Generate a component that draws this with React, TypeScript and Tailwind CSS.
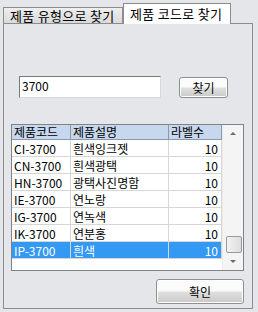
const rows = [
  { code: "CI-3700", desc: "흰색잉크젯", n: 10 },
  { code: "CN-3700", desc: "흰색광택", n: 10 },
  { code: "HN-3700", desc: "광택사진명함", n: 10 },
  { code: "IE-3700", desc: "연노랑", n: 10 },
  { code: "IG-3700", desc: "연녹색", n: 10 },
  { code: "IK-3700", desc: "연분홍", n: 10 },
  { code: "IP-3700", desc: "흰색", n: 10, selected: true },
]

const font = { fontFamily: '"Noto Sans CJK KR", "Noto Sans", sans-serif' }

function Btn({ label, className }: { label: string; className: string }) {
  return (
    <button
      className={`flex items-center justify-center rounded-[3px] border border-[#8e8f8f] bg-gradient-to-b from-[#fbfbfb] from-45% via-[#dedede] via-55% to-[#c9c9c9] text-[12px] text-black shadow-[inset_0_0_0_1px_#fff] ${className}`}
    >
      {label}
    </button>
  )
}

export default function App() {
  return (
    <div
      className="w-[258px] h-[312px] bg-[#e4e6ea] px-[3px] pt-[2px] overflow-hidden"
      style={font}
    >
      {/* tabs */}
      <div className="flex items-end h-[21px]">
        <div className="h-[16px] w-[120px] border border-b-0 border-[#8c8c8c] bg-gradient-to-b from-[#efefef] to-[#dadada] text-[13px] leading-[15px] tracking-[0.3px] pl-[6px] text-black">
          제품 유형으로 찾기
        </div>
        <div className="relative z-10 -mb-px h-[21px] w-[108px] border border-b-0 border-[#8c8c8c] bg-white text-[13px] leading-[20px] tracking-[0.3px] pl-[6px] text-black">
          제품 코드로 찾기
        </div>
      </div>

      {/* panel */}
      <div className="h-[286px] w-[250px] border border-[#8c8c8c] bg-[#e4e6ea]">
        <div className="flex items-start mt-[52px] ml-[15px]">
          <div className="h-[22px] w-[142px] border border-t-[#7a7a7a] border-l-[#7a7a7a] border-r-[#d8d8d8] border-b-[#d8d8d8] bg-white text-[12px] leading-[17px] pl-[2px] text-black">
            3700
          </div>
          <Btn label="찾기" className="ml-[18px] mt-px h-[21px] w-[49px]" />
        </div>

        {/* table */}
        <div className="mt-[26px] ml-[7px] flex h-[147px] w-[233px] border border-[#7f8387] bg-white">
          <div className="flex-1">
            <div className="flex h-[15px] bg-[#c7d8ee] text-[12px] leading-[14px] text-black">
              <div className="w-[59px] border-r border-b border-[#8a9aac] pl-[2px]">제품코드</div>
              <div className="w-[98px] border-r border-b border-[#8a9aac] pl-[2px]">제품설명</div>
              <div className="w-[53px] border-r border-b border-[#8a9aac] pl-[2px]">라벨수</div>
            </div>
            {rows.map((r) => (
              <div
                key={r.code}
                className={`flex h-[17px] text-[12px] leading-[17px] ${
                  r.selected ? "bg-[#3399f3] text-white" : "text-black"
                }`}
              >
                <div className="w-[59px] border-r border-b border-[#d6d6d6] pl-[2px]">{r.code}</div>
                <div className="w-[98px] border-r border-b border-[#d6d6d6] pl-[2px]">{r.desc}</div>
                <div className="w-[53px] border-r border-b border-[#d6d6d6] pr-[3px] text-right">{r.n}</div>
              </div>
            ))}
          </div>
          {/* scrollbar */}
          <div className="relative w-[21px] bg-[#f4f4f4] border-l border-[#ececec]">
            <div className="absolute left-[7px] top-[7px] h-0 w-0 border-x-[3px] border-b-[3px] border-x-transparent border-b-[#6a6a6a]" />
            <div className="absolute left-[3px] top-[111px] h-[17px] w-[16px] rounded-[2px] border border-[#9a9a9a] bg-gradient-to-r from-[#f3f3f3] to-[#dcdcdc]" />
            <div className="absolute left-[7px] top-[135px] h-0 w-0 border-x-[3px] border-t-[3px] border-x-transparent border-t-[#6a6a6a]" />
          </div>
        </div>

        <div className="flex justify-end mt-[8px] pr-[8px]">
          <Btn label="확인" className="h-[25px] w-[88px]" />
        </div>
      </div>
    </div>
  )
}
